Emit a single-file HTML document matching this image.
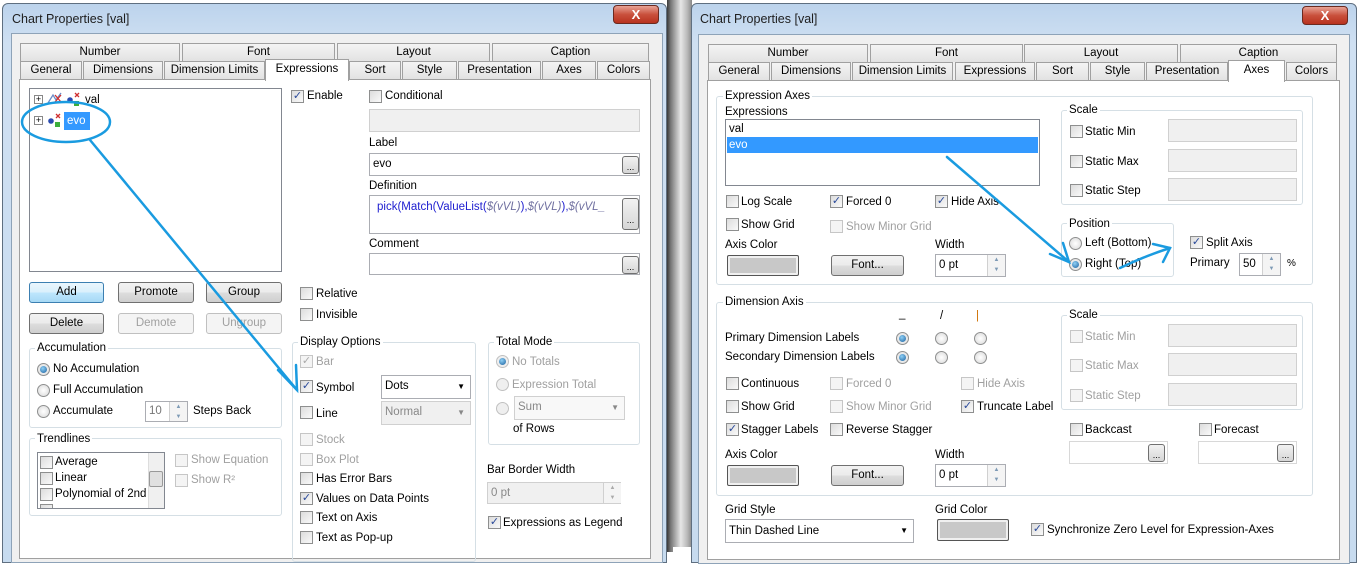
<!DOCTYPE html><html><head><meta charset="utf-8"><style>
*{box-sizing:border-box}
body{margin:0;width:1359px;height:552px;position:relative;overflow:hidden;background:#fff;font-family:"Liberation Sans",sans-serif;font-size:11.5px;color:#000}
div,span{position:absolute}
.win{background:linear-gradient(#bcd3ec,#cfe0f2 40px,#c7dbef);border:1px solid #5f6f80;border-radius:6px 6px 0 0}
.title{font-size:12.5px;color:#1e1e1e}
.close{width:46px;height:19px;border-radius:4px;background:linear-gradient(#e8a395,#c9503c 50%,#b8321f);border:1px solid #6b2a20;color:#fff;font-weight:bold;text-align:center;line-height:17px;font-size:13px}
.inner{background:#f0f0f0;border:1px solid #8ea3b8}
.tab{height:18px;border:1px solid #a0a0a0;border-bottom:none;background:linear-gradient(#f4f4f4,#e2e2e2);text-align:center;line-height:17px}
.tab.sel{background:#fff;height:22px;z-index:2;line-height:18px}
.panel{background:#fff;border:1px solid #a0a0a0}
.grp{border:1px solid #d5dfe5;border-radius:3px}
.lg{background:#fff;padding:0 2px;line-height:13px}
.t{white-space:nowrap;line-height:14px}
.g{color:#a0a0a0}
.cb{width:13px;height:13px;border:1px solid #8e8f8f;background:linear-gradient(135deg,#dcdcdc,#fafafa);font-size:11px;line-height:11px;text-align:center;color:#2a4a9a}
.cb.d{border-color:#c6c6c6;background:#f4f4f4;color:#aaa}
.rb{width:13px;height:13px;border-radius:50%;border:1px solid #8e8f8f;background:radial-gradient(#fff,#d8d8d8)}
.rb.on::after{content:"";position:absolute;left:2px;top:2px;width:7px;height:7px;border-radius:50%;background:radial-gradient(circle at 40% 35%,#8fd0f5,#1a5f9e)}
.rb.d{border-color:#c0c0c0;background:#efefef}
.btn{border:1px solid #707070;border-radius:3px;background:linear-gradient(#f2f2f2,#ebebeb 50%,#dddddd 51%,#cfcfcf);text-align:center;line-height:18px}
.btn.d{border-color:#c0c0c0;background:#f4f4f4;color:#a0a0a0}
.btn.blue{border-color:#3c7fb1;background:linear-gradient(#eaf6fd,#d9f0fc 50%,#bee6fd 51%,#a7d9f5)}
.inp{background:#fff;border:1px solid #abadb3;padding-left:3px;line-height:20px}
.inp.gr{background:#f0f0f0;border-color:#d0d0d0}
.dots{width:17px;height:18px;border:1px solid #707070;border-radius:3px;background:linear-gradient(#f2f2f2,#d6d6d6);font-size:9px;text-align:center;line-height:20px}
.spin{width:18px;border-left:1px solid #d0d0d0;background:#f4f4f4;font-size:6px;color:#7d9ab5;text-align:center;line-height:10px}
.color{border:1px solid #555;border-radius:2px;background:#c8c8c8;box-shadow:inset 0 0 0 2px #f0f0f0}
</style></head><body>

<!-- shadow between windows -->
<div style="left:667px;top:0;width:25px;height:552px;background:linear-gradient(to right,#3a3a3a,#777 15%,#e6e6e6 55%,#bbb 80%,#888)"></div>
<div style="left:673px;top:547px;width:19px;height:5px;background:#fff"></div>

<!-- LEFT WINDOW -->
<div class="win" style="left:2px;top:3px;width:665px;height:560px"></div>
<div class="t title" style="left:12px;top:12px">Chart Properties [val]</div>
<div class="close" style="left:613px;top:5px">X</div>
<div class="inner" style="left:11px;top:33px;width:652px;height:530px"></div>
<div class="tab" style="left:20px;top:43px;width:160px">Number</div>
<div class="tab" style="left:182px;top:43px;width:153px">Font</div>
<div class="tab" style="left:337px;top:43px;width:153px">Layout</div>
<div class="tab" style="left:492px;top:43px;width:157px">Caption</div>
<div class="tab" style="left:20px;top:61px;width:62px">General</div>
<div class="tab" style="left:83px;top:61px;width:80px">Dimensions</div>
<div class="tab" style="left:164px;top:61px;width:101px">Dimension Limits</div>
<div class="tab" style="left:349px;top:61px;width:52px">Sort</div>
<div class="tab" style="left:402px;top:61px;width:55px">Style</div>
<div class="tab" style="left:458px;top:61px;width:83px">Presentation</div>
<div class="tab" style="left:542px;top:61px;width:54px">Axes</div>
<div class="tab" style="left:597px;top:61px;width:53px">Colors</div>
<div class="panel" style="left:19px;top:79px;width:632px;height:480px"></div>
<div class="tab sel" style="left:265px;top:59px;width:84px">Expressions</div>

<div style="left:29px;top:88px;width:253px;height:184px;background:#fff;border:1px solid #828790"></div>
<div class="t" style="left:34px;top:95px;font-size:9px;border:1px solid #888;width:9px;height:9px;line-height:7px;text-align:center">+</div>
<svg style="position:absolute;left:47px;top:92px" width="16" height="12"><path d="M1,11 L6,3 L9,8 L14,1" fill="none" stroke="#6a8cc8" stroke-width="1.3"/><path d="M8,3 L14,10 M14,3 L8,10" stroke="#d03030" stroke-width="1.3"/></svg>
<svg style="position:absolute;left:66px;top:92px" width="16" height="14"><circle cx="4" cy="8" r="2.8" fill="#2a4bb0"/><rect x="8" y="9" width="5" height="5" fill="#3cae3c"/><path d="M9,1 L13,5 M13,1 L9,5" stroke="#d03030" stroke-width="1.3"/></svg>
<div class="t" style="left:85px;top:93px">val</div>
<div class="t" style="left:34px;top:116px;font-size:9px;border:1px solid #888;width:9px;height:9px;line-height:7px;text-align:center">+</div>
<svg style="position:absolute;left:47px;top:113px" width="16" height="14"><circle cx="4" cy="8" r="2.8" fill="#2a4bb0"/><rect x="8" y="9" width="5" height="5" fill="#3cae3c"/><path d="M9,1 L13,5 M13,1 L9,5" stroke="#d03030" stroke-width="1.3"/></svg>
<div class="t" style="left:64px;top:112px;background:#3399ff;color:#fff;width:26px;height:18px;line-height:18px;padding-left:3px">evo</div>

<div class="cb" style="left:291px;top:90px">✓</div><div class="t" style="left:307px;top:89px">Enable</div>
<div class="cb" style="left:369px;top:90px"></div><div class="t" style="left:385px;top:89px">Conditional</div>
<div class="inp gr" style="left:369px;top:109px;width:271px;height:23px"></div>
<div class="t" style="left:369px;top:136px">Label</div>
<div class="inp" style="left:369px;top:153px;width:271px;height:23px">evo</div>
<div class="dots" style="left:622px;top:156px">...</div>
<div class="t" style="left:369px;top:179px">Definition</div>
<div class="inp" style="left:369px;top:195px;width:271px;height:39px;overflow:hidden;padding-left:7px;line-height:22px;color:#2020d0;white-space:nowrap">pick(Match(ValueList(<i style="color:#7070a0">$(vVL)</i>),<i style="color:#7070a0">$(vVL)</i>),<i style="color:#7070a0">$(vVL_</i></div>
<div class="dots" style="left:622px;top:198px;height:32px;line-height:42px">...</div>
<div class="t" style="left:369px;top:237px">Comment</div>
<div class="inp" style="left:369px;top:253px;width:271px;height:22px"></div>
<div class="dots" style="left:622px;top:256px">...</div>

<div class="btn blue" style="left:29px;top:282px;width:75px;height:21px">Add</div>
<div class="btn" style="left:118px;top:282px;width:76px;height:21px">Promote</div>
<div class="btn" style="left:206px;top:282px;width:76px;height:21px">Group</div>
<div class="btn" style="left:29px;top:313px;width:75px;height:21px">Delete</div>
<div class="btn d" style="left:118px;top:313px;width:76px;height:21px">Demote</div>
<div class="btn d" style="left:206px;top:313px;width:76px;height:21px">Ungroup</div>

<div class="grp" style="left:29px;top:348px;width:253px;height:80px"></div>
<div class="t lg" style="left:35px;top:341px">Accumulation</div>
<div class="rb on" style="left:37px;top:363px"></div><div class="t" style="left:53px;top:362px">No Accumulation</div>
<div class="rb" style="left:37px;top:384px"></div><div class="t" style="left:53px;top:383px">Full Accumulation</div>
<div class="rb" style="left:37px;top:405px"></div><div class="t" style="left:53px;top:404px">Accumulate</div>
<div class="inp" style="left:145px;top:401px;width:43px;height:21px;color:#777;line-height:19px">10</div>
<div class="spin" style="left:169px;top:402px;height:19px">▲<br>▼</div>
<div class="t" style="left:193px;top:404px">Steps Back</div>

<div class="grp" style="left:29px;top:438px;width:253px;height:78px"></div>
<div class="t lg" style="left:35px;top:432px">Trendlines</div>
<div style="left:37px;top:452px;width:128px;height:57px;background:#fff;border:1px solid #828790;overflow:hidden">
<div class="cb" style="left:2px;top:3px"></div><div class="t" style="left:17px;top:2px">Average</div>
<div class="cb" style="left:2px;top:19px"></div><div class="t" style="left:17px;top:18px">Linear</div>
<div class="cb" style="left:2px;top:35px"></div><div class="t" style="left:17px;top:34px">Polynomial of 2nd d</div>
<div class="cb" style="left:2px;top:51px"></div>
<div style="left:110px;top:0;width:16px;height:56px;background:#f0f0f0;border-left:1px solid #ddd"></div>
<div style="left:111px;top:18px;width:14px;height:16px;background:#e0e0e0;border:1px solid #999;border-radius:2px"></div>
</div>
<div class="cb d" style="left:175px;top:454px"></div><div class="t g" style="left:191px;top:453px">Show Equation</div>
<div class="cb d" style="left:175px;top:474px"></div><div class="t g" style="left:191px;top:473px">Show R²</div>

<div class="cb" style="left:300px;top:287px"></div><div class="t" style="left:316px;top:287px">Relative</div>
<div class="cb" style="left:300px;top:308px"></div><div class="t" style="left:316px;top:308px">Invisible</div>

<div class="grp" style="left:292px;top:342px;width:184px;height:220px"></div>
<div class="t lg" style="left:298px;top:335px">Display Options</div>
<div class="cb d" style="left:300px;top:355px">✓</div><div class="t g" style="left:316px;top:355px">Bar</div>
<div class="cb" style="left:300px;top:380px">✓</div><div class="t" style="left:316px;top:381px">Symbol</div>
<div class="inp" style="left:381px;top:375px;width:90px;height:24px;line-height:21px">Dots<span style="right:5px;top:0;font-size:8px">▼</span></div>
<div class="cb" style="left:300px;top:406px"></div><div class="t" style="left:316px;top:407px">Line</div>
<div class="inp gr" style="left:381px;top:401px;width:90px;height:24px;line-height:21px;color:#888">Normal<span style="right:5px;top:0;font-size:8px">▼</span></div>
<div class="cb d" style="left:300px;top:433px"></div><div class="t g" style="left:316px;top:433px">Stock</div>
<div class="cb d" style="left:300px;top:453px"></div><div class="t g" style="left:316px;top:453px">Box Plot</div>
<div class="cb" style="left:300px;top:472px"></div><div class="t" style="left:316px;top:472px">Has Error Bars</div>
<div class="cb" style="left:300px;top:492px">✓</div><div class="t" style="left:316px;top:492px">Values on Data Points</div>
<div class="cb" style="left:300px;top:511px"></div><div class="t" style="left:316px;top:511px">Text on Axis</div>
<div class="cb" style="left:300px;top:531px"></div><div class="t" style="left:316px;top:531px">Text as Pop-up</div>

<div class="grp" style="left:488px;top:342px;width:152px;height:103px"></div>
<div class="t lg" style="left:494px;top:335px">Total Mode</div>
<div class="rb on d" style="left:496px;top:355px"></div><div class="t g" style="left:512px;top:355px">No Totals</div>
<div class="rb d" style="left:496px;top:378px"></div><div class="t g" style="left:512px;top:378px">Expression Total</div>
<div class="rb d" style="left:496px;top:402px"></div>
<div class="inp gr" style="left:514px;top:396px;width:111px;height:24px;line-height:21px;color:#888;background:#f8f8f8">Sum<span style="right:5px;top:0;font-size:8px">▼</span></div>
<div class="t" style="left:513px;top:422px">of Rows</div>
<div class="t" style="left:487px;top:463px">Bar Border Width</div>
<div class="inp gr" style="left:487px;top:482px;width:134px;height:22px;color:#888">0 pt</div>
<div class="spin" style="left:603px;top:483px;height:20px;color:#aaa">▲<br>▼</div>
<div class="cb" style="left:488px;top:516px">✓</div><div class="t" style="left:503px;top:516px">Expressions as Legend</div>

<!-- RIGHT WINDOW -->
<div class="win" style="left:691px;top:3px;width:666px;height:560px"></div>
<div class="t title" style="left:700px;top:12px">Chart Properties [val]</div>
<div class="close" style="left:1302px;top:6px">X</div>
<div class="inner" style="left:698px;top:34px;width:652px;height:530px"></div>
<div class="tab" style="left:708px;top:44px;width:160px">Number</div>
<div class="tab" style="left:870px;top:44px;width:153px">Font</div>
<div class="tab" style="left:1024px;top:44px;width:154px">Layout</div>
<div class="tab" style="left:1180px;top:44px;width:157px">Caption</div>
<div class="tab" style="left:708px;top:62px;width:62px">General</div>
<div class="tab" style="left:771px;top:62px;width:80px">Dimensions</div>
<div class="tab" style="left:852px;top:62px;width:101px">Dimension Limits</div>
<div class="tab" style="left:955px;top:62px;width:80px">Expressions</div>
<div class="tab" style="left:1036px;top:62px;width:53px">Sort</div>
<div class="tab" style="left:1090px;top:62px;width:55px">Style</div>
<div class="tab" style="left:1146px;top:62px;width:82px">Presentation</div>
<div class="tab" style="left:1286px;top:62px;width:51px">Colors</div>
<div class="panel" style="left:707px;top:80px;width:633px;height:480px"></div>
<div class="tab sel" style="left:1228px;top:60px;width:57px">Axes</div>

<div class="grp" style="left:716px;top:96px;width:597px;height:189px"></div>
<div class="t lg" style="left:723px;top:89px">Expression Axes</div>
<div class="t" style="left:725px;top:105px">Expressions</div>
<div style="left:725px;top:119px;width:315px;height:67px;background:#fff;border:1px solid #828790"></div>
<div class="t" style="left:729px;top:122px">val</div>
<div class="t" style="left:727px;top:137px;width:311px;height:16px;background:#3399ff;color:#fff;padding-left:2px;line-height:16px">evo</div>

<div class="grp" style="left:1061px;top:110px;width:242px;height:95px"></div>
<div class="t lg" style="left:1067px;top:103px">Scale</div>
<div class="cb" style="left:1070px;top:125px"></div><div class="t" style="left:1085px;top:125px">Static Min</div>
<div class="inp gr" style="left:1168px;top:119px;width:129px;height:23px"></div>
<div class="cb" style="left:1070px;top:155px"></div><div class="t" style="left:1085px;top:155px">Static Max</div>
<div class="inp gr" style="left:1168px;top:149px;width:129px;height:23px"></div>
<div class="cb" style="left:1070px;top:184px"></div><div class="t" style="left:1085px;top:184px">Static Step</div>
<div class="inp gr" style="left:1168px;top:178px;width:129px;height:23px"></div>

<div class="cb" style="left:726px;top:195px"></div><div class="t" style="left:741px;top:195px">Log Scale</div>
<div class="cb" style="left:830px;top:195px">✓</div><div class="t" style="left:846px;top:195px">Forced 0</div>
<div class="cb" style="left:935px;top:195px">✓</div><div class="t" style="left:951px;top:195px">Hide Axis</div>
<div class="cb" style="left:726px;top:218px"></div><div class="t" style="left:741px;top:218px">Show Grid</div>
<div class="cb d" style="left:830px;top:220px"></div><div class="t g" style="left:846px;top:220px">Show Minor Grid</div>
<div class="t" style="left:725px;top:238px">Axis Color</div>
<div class="color" style="left:727px;top:255px;width:72px;height:21px"></div>
<div class="btn" style="left:831px;top:255px;width:73px;height:21px">Font...</div>
<div class="t" style="left:935px;top:238px">Width</div>
<div class="inp" style="left:935px;top:254px;width:71px;height:23px">0 pt</div>
<div class="spin" style="left:987px;top:255px;height:21px">▲<br>▼</div>

<div class="grp" style="left:1061px;top:223px;width:113px;height:54px"></div>
<div class="t lg" style="left:1067px;top:217px">Position</div>
<div class="rb" style="left:1069px;top:237px"></div><div class="t" style="left:1085px;top:236px">Left (Bottom)</div>
<div class="rb on" style="left:1069px;top:258px"></div><div class="t" style="left:1085px;top:257px">Right (Top)</div>
<div class="cb" style="left:1190px;top:236px">✓</div><div class="t" style="left:1206px;top:236px">Split Axis</div>
<div class="t" style="left:1190px;top:256px">Primary</div>
<div class="inp" style="left:1239px;top:253px;width:42px;height:23px">50</div>
<div class="spin" style="left:1262px;top:254px;height:21px">▲<br>▼</div>
<div class="t" style="left:1287px;top:257px;font-size:10px">%</div>

<div class="grp" style="left:716px;top:302px;width:597px;height:194px"></div>
<div class="t lg" style="left:723px;top:295px">Dimension Axis</div>
<div class="t" style="left:899px;top:307px">_</div>
<div class="t" style="left:940px;top:309px">/</div>
<div class="t" style="left:976px;top:309px;color:#d07000">|</div>
<div class="t" style="left:725px;top:331px">Primary Dimension Labels</div>
<div class="rb on" style="left:896px;top:332px"></div><div class="rb" style="left:935px;top:332px"></div><div class="rb" style="left:974px;top:332px"></div>
<div class="t" style="left:725px;top:350px">Secondary Dimension Labels</div>
<div class="rb on" style="left:896px;top:351px"></div><div class="rb" style="left:935px;top:351px"></div><div class="rb" style="left:974px;top:351px"></div>

<div class="grp" style="left:1061px;top:315px;width:242px;height:95px"></div>
<div class="t lg" style="left:1067px;top:308px">Scale</div>
<div class="cb d" style="left:1070px;top:330px"></div><div class="t g" style="left:1085px;top:330px">Static Min</div>
<div class="inp gr" style="left:1168px;top:324px;width:129px;height:23px"></div>
<div class="cb d" style="left:1070px;top:359px"></div><div class="t g" style="left:1085px;top:359px">Static Max</div>
<div class="inp gr" style="left:1168px;top:353px;width:129px;height:23px"></div>
<div class="cb d" style="left:1070px;top:389px"></div><div class="t g" style="left:1085px;top:389px">Static Step</div>
<div class="inp gr" style="left:1168px;top:383px;width:129px;height:23px"></div>

<div class="cb" style="left:726px;top:377px"></div><div class="t" style="left:741px;top:377px">Continuous</div>
<div class="cb d" style="left:830px;top:377px"></div><div class="t g" style="left:846px;top:377px">Forced 0</div>
<div class="cb d" style="left:961px;top:377px"></div><div class="t g" style="left:977px;top:377px">Hide Axis</div>
<div class="cb" style="left:726px;top:400px"></div><div class="t" style="left:741px;top:400px">Show Grid</div>
<div class="cb d" style="left:830px;top:400px"></div><div class="t g" style="left:846px;top:400px">Show Minor Grid</div>
<div class="cb" style="left:961px;top:400px">✓</div><div class="t" style="left:977px;top:400px">Truncate Label</div>
<div class="cb" style="left:726px;top:423px">✓</div><div class="t" style="left:741px;top:423px">Stagger Labels</div>
<div class="cb" style="left:830px;top:423px"></div><div class="t" style="left:846px;top:423px">Reverse Stagger</div>
<div class="cb" style="left:1070px;top:423px"></div><div class="t" style="left:1085px;top:423px">Backcast</div>
<div class="cb" style="left:1199px;top:423px"></div><div class="t" style="left:1214px;top:423px">Forecast</div>
<div class="inp" style="left:1069px;top:441px;width:99px;height:23px;border-color:#d8d8d8"></div>
<div class="dots" style="left:1148px;top:444px">...</div>
<div class="inp" style="left:1198px;top:441px;width:99px;height:23px;border-color:#d8d8d8"></div>
<div class="dots" style="left:1277px;top:444px">...</div>
<div class="t" style="left:725px;top:448px">Axis Color</div>
<div class="color" style="left:727px;top:465px;width:72px;height:21px"></div>
<div class="btn" style="left:831px;top:465px;width:73px;height:21px">Font...</div>
<div class="t" style="left:935px;top:448px">Width</div>
<div class="inp" style="left:935px;top:464px;width:71px;height:23px">0 pt</div>
<div class="spin" style="left:987px;top:465px;height:21px">▲<br>▼</div>

<div class="t" style="left:725px;top:503px">Grid Style</div>
<div class="inp" style="left:725px;top:519px;width:189px;height:24px;line-height:22px">Thin Dashed Line<span style="right:5px;top:0;font-size:8px">▼</span></div>
<div class="t" style="left:935px;top:503px">Grid Color</div>
<div class="color" style="left:937px;top:519px;width:72px;height:22px"></div>
<div class="cb" style="left:1031px;top:523px">✓</div><div class="t" style="left:1047px;top:523px">Synchronize Zero Level for Expression-Axes</div>

<!-- annotations -->
<svg style="position:absolute;left:0;top:0" width="1359" height="552">
<g fill="none" stroke="#1a9be0" stroke-width="2.5" stroke-linecap="round">
<ellipse cx="66" cy="122" rx="44" ry="20"/>
<line x1="90" y1="140" x2="297" y2="390"/>
<polyline points="278,370 297,390 296,365"/>
<line x1="947" y1="157" x2="1069" y2="262"/>
<polyline points="1050,254 1069,262 1063,243"/>
<path d="M1120,268 Q1145,256 1170,248"/>
<polyline points="1153,244 1170,248 1163,262"/>
</g></svg>
</body></html>
